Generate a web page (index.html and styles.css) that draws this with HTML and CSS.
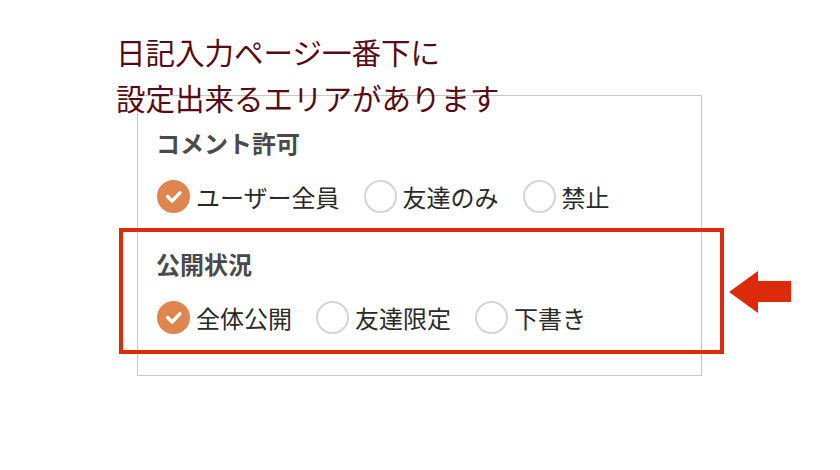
FILE: index.html
```html
<!DOCTYPE html>
<html lang="ja">
<head>
<meta charset="utf-8">
<link rel="stylesheet" href="styles.css">
</head>
<body>
<div class="title">日記入力ページ一番下に<br>設定出来るエリアがあります</div>
<div class="panel">
  <div class="section">
    <div class="heading">コメント許可</div>
    <div class="options">
      <label class="opt"><span class="radio checked"><svg viewBox="0 0 32 32" width="32" height="32"><polyline points="9.5,16.5 14.5,21.5 23,12.5" fill="none" stroke="#fff" stroke-width="3.8" stroke-linecap="round" stroke-linejoin="round"/></svg></span>ユーザー全員</label>
      <label class="opt"><span class="radio"></span>友達のみ</label>
      <label class="opt"><span class="radio"></span>禁止</label>
    </div>
  </div>
  <div class="section highlight">
    <div class="heading">公開状況</div>
    <div class="options">
      <label class="opt"><span class="radio checked"><svg viewBox="0 0 32 32" width="32" height="32"><polyline points="9.5,16.5 14.5,21.5 23,12.5" fill="none" stroke="#fff" stroke-width="3.8" stroke-linecap="round" stroke-linejoin="round"/></svg></span>全体公開</label>
      <label class="opt"><span class="radio"></span>友達限定</label>
      <label class="opt"><span class="radio"></span>下書き</label>
    </div>
    <svg class="arrow" viewBox="0 0 62 42" width="62" height="42"><polygon points="0,21 29,0 29,10 62,10 62,31 29,31 29,42" fill="#dc2a0a"/></svg>
  </div>
</div>
</body>
</html>
```
FILE: styles.css
```css
html, body {
  margin: 0;
  padding: 0;
  background: #fff;
}
body {
  width: 840px;
  height: 470px;
  overflow: hidden;
  font-family: "Noto Sans CJK JP", "Noto Sans", sans-serif;
}
.title {
  padding: 28px 0 0 116px;
  font-size: 29.5px;
  line-height: 46px;
  color: #560c14;
}
.panel {
  margin: -25px 0 0 137px;
  width: 526px;
  border: 1px solid #c8c8c8;
  padding: 31px 19px 21px 18px;
}
.heading {
  font-size: 24px;
  line-height: 32px;
  font-weight: 700;
  color: #4a4a4a;
}
.options {
  display: flex;
  align-items: center;
  gap: 23px;
  margin-top: 20px;
  height: 34px;
}
.opt {
  display: flex;
  align-items: center;
  gap: 6px;
  font-size: 24px;
  color: #2a2a2a;
}
.radio {
  box-sizing: border-box;
  width: 33px;
  height: 33px;
  border-radius: 50%;
  border: 2px solid #d6d6d6;
  background: #fff;
  display: flex;
  align-items: center;
  justify-content: center;
  flex: none;
  margin-left: 1px;
}
.radio.checked {
  background: #df864f;
  border-color: #df864f;
}
.radio svg {
  display: block;
}
.highlight {
  position: relative;
  margin: 15px -42px 0 -37px;
  border: 4px solid #dc2a0a;
  padding: 16px 0 16px 33px;
}
.arrow {
  position: absolute;
  left: calc(100% + 9px);
  top: 39px;
  display: block;
}
```
